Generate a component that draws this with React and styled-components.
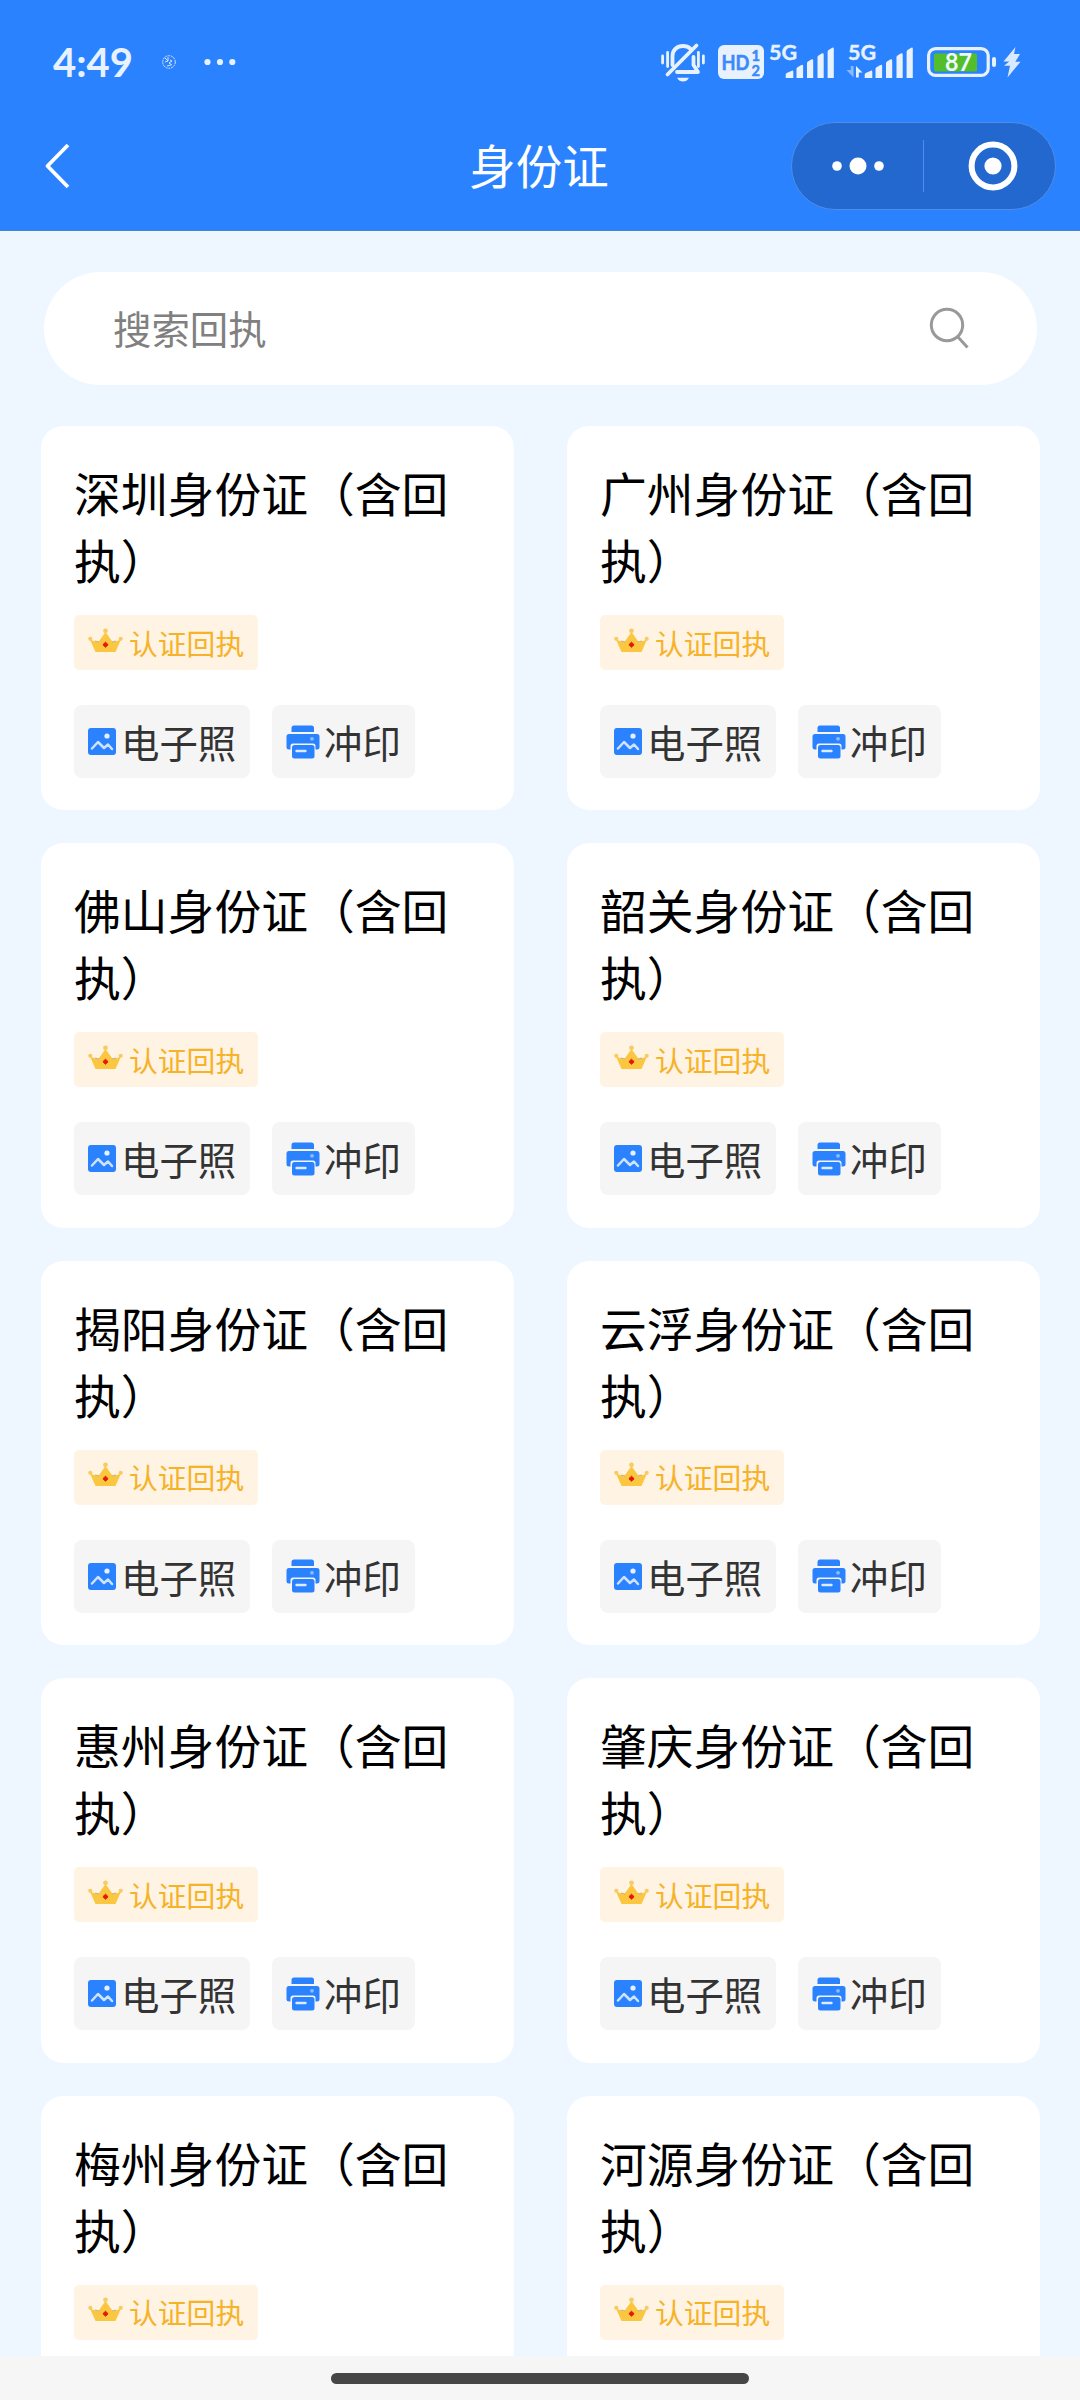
import React from 'react';
import styled, { createGlobalStyle } from 'styled-components';

const cityList = [
  { id: 1, name: '深圳' },
  { id: 2, name: '广州' },
  { id: 3, name: '佛山' },
  { id: 4, name: '韶关' },
  { id: 5, name: '揭阳' },
  { id: 6, name: '云浮' },
  { id: 7, name: '惠州' },
  { id: 8, name: '肇庆' },
  { id: 9, name: '梅州' },
  { id: 10, name: '河源' },
];

const signalBars = [
  { x: 16.7, y: 28.7, w: 7.6 },
  { x: 27.5, y: 23, w: 6.6 },
  { x: 38, y: 17.3, w: 6.2 },
  { x: 48.5, y: 11.3, w: 6.2 },
  { x: 58.6, y: 5.7, w: 6.2 },
];

const BellOffIcon = () => (
  <svg width="44" height="40" viewBox="0 0 44 40" fill="none" stroke="#e8f2ff" strokeLinecap="round">
    <path d="M1.6 14v7M6.6 10.5v14M37.4 10.5v14M42.4 14v7" strokeWidth="2.8" />
    <path d="M11.5 23V14C11.5 8 16 4 22 4c3 0 5.6 1 7.5 2.8" strokeWidth="3.8" />
    <path d="M32.5 15v8l4.5 7H16" strokeWidth="3.8" strokeLinejoin="round" />
    <path d="M35.500 3.500L6.500 32.500" strokeWidth="3.8" />
    <path d="M16 35.8h12c-1.5 2.6-3.5 3.8-6 3.8s-4.5-1.2-6-3.8z" fill="#e8f2ff" stroke="none" />
  </svg>
);

const HdIcon = () => (
  <svg width="46" height="40" viewBox="0 0 46 40">
    <rect x="0" y="3" width="46" height="34" rx="6" fill="#e8f2ff" />
    <HdText x="3.5" y="27.5" fontSize="21" textLength="28" lengthAdjust="spacingAndGlyphs">HD</HdText>
    <HdText x="33.5" y="19" fontSize="16" textLength="8.5" lengthAdjust="spacingAndGlyphs">1</HdText>
    <HdText x="33.5" y="34" fontSize="16" textLength="8.5" lengthAdjust="spacingAndGlyphs">2</HdText>
  </svg>
);

const SignalIcon = ({ active }) => (
  <svg width="66" height="40" viewBox="0 0 66 40" fill="#e8f2ff">
    <NetText x="0" y="18.3" textLength="28" lengthAdjust="spacingAndGlyphs">5G</NetText>
    {active && (
      <>
        <path d="M5.5 24v11.5L-1.5 28H2.8V24z" opacity=".5" />
        <path d="M8 35.5V24l6.5 6.5h-3.7v5z" />
      </>
    )}
    {signalBars.map((bar) => (
      <path
        key={bar.x}
        d={`M${bar.x} 36V${bar.y + 4}q0-1 1-1.8l${bar.w - 3}-2q2-1 2 1V36z`}
      />
    ))}
  </svg>
);

const BatteryIcon = () => (
  <svg width="70" height="40" viewBox="0 0 70 40">
    <rect x="1.6" y="6.6" width="59.6" height="26.8" rx="7" fill="none" stroke="#e8f2ff" strokeWidth="3.2" />
    <rect x="7" y="11.5" width="43" height="18" rx="1.5" fill="#52be2c" />
    <rect x="65" y="15" width="4" height="10" rx="2" fill="#e8f2ff" />
    <BatteryText x="18" y="29" textLength="27" lengthAdjust="spacingAndGlyphs">87</BatteryText>
  </svg>
);

const BoltIcon = () => (
  <svg width="18" height="40" viewBox="0 0 18 40">
    <path d="M12.5 5L.5 19.5h5.8L1 23.8h6L4.5 35.5 17.5 19.8h-5.2L17 12h-6z" fill="#d9e9ff" />
  </svg>
);

const CrownIcon = () => (
  <svg width="35" height="25" viewBox="0 0 35 25">
    <path d="M2 11.5l8 3L17.5 4l7.5 10.5 8-3-5.5 12.5h-20z" fill="#fbc740" />
    <path d="M7 13l4 1.2M28 13l-4 1.2" stroke="#c9b27c" strokeWidth="1.3" />
    <circle cx="17.5" cy="2.8" r="2.4" fill="#f8cb62" />
    <circle cx="2.3" cy="10.8" r="2.1" fill="#f8cb62" />
    <circle cx="32.7" cy="10.8" r="2.1" fill="#f8cb62" />
    <path d="M17.5 14.2l2.6 2.5-2.6 2.5-2.6-2.5z" fill="#e3170a" stroke="#e3170a" strokeLinejoin="round" />
  </svg>
);

const PhotoIcon = () => (
  <svg width="28" height="27" viewBox="0 0 28 27" fill="none">
    <rect width="28" height="27" rx="3" fill="#2a82ff" />
    <circle cx="19" cy="8" r="2.6" fill="#e6f1ff" />
    <path d="M4 20.5l6-6.5 6 6 4-3.5 4 4.5" stroke="#cfe3ff" strokeWidth="2.5" strokeLinecap="round" strokeLinejoin="round" />
  </svg>
);

const PrinterIcon = () => (
  <svg width="34" height="34" viewBox="0 0 34 34" fill="#2a82ff">
    <path d="M5.5 7V3q0-2.5 2.5-2.5h17.500q2.500 0 2.500 2.500v4z" />
    <path d="M3 9h28q2.5 0 2.5 2.5V22q0 2.5-2.5 2.5h-1.5V21q0-2.5-2.5-2.5H7Q4.500 18.500 4.500 21v3.500H3Q.5 24.500.5 22V11.500Q.5 9 3 9z" />
    <rect x="6" y="20" width="22.5" height="13.5" rx="2.5" />
    <path d="M10.5 26h9" stroke="#dcebff" strokeWidth="2.4" strokeLinecap="round" />
    <circle cx="26" cy="13.8" r="1.9" fill="#8cbcff" />
  </svg>
);

const App = () => {
  return (
    <Container>
      <GlobalStyle />
      <Header>
        <StatusBar>
          <Time>4:49</Time>
          <NoticeIcons>
            <svg width="14" height="14" viewBox="0 0 14 14" fill="none" stroke="#d5e7ff">
              <circle cx="7" cy="7" r="6.3" strokeDasharray="2 .8" />
              <path d="M3 3l3 3M6 2v4l-3 1M8 5l2 1-3 2 3 2M5 11l4-1" />
            </svg>
            <svg width="32" height="8" viewBox="0 0 32 8" fill="#e8f2ff">
              <circle cx="3.5" cy="4" r="3.1" />
              <circle cx="16" cy="4" r="3.1" />
              <circle cx="28.3" cy="4" r="3.1" />
            </svg>
          </NoticeIcons>
          <DeviceIcons>
            <BellOffIcon />
            <HdIcon />
            <SignalIcon />
            <SignalIcon active />
            <BatteryIcon />
            <BoltIcon />
          </DeviceIcons>
        </StatusBar>
        <NavBar>
          <BackButton aria-label="返回">
            <svg width="26" height="46" viewBox="0 0 26 46" fill="none" stroke="#fff" strokeWidth="3.8">
              <path d="M24 2L3.5 23 24 44" strokeLinejoin="round" />
            </svg>
          </BackButton>
          <PageTitle>身份证</PageTitle>
          <Capsule>
            <CapsuleButton $width="131px" aria-label="更多">
              <svg width="52" height="18" viewBox="0 0 52 18" fill="#fff">
                <circle cx="5" cy="9" r="4.8" />
                <circle cx="26" cy="9" r="8.5" />
                <circle cx="47" cy="9" r="4.8" />
              </svg>
            </CapsuleButton>
            <CapsuleLine />
            <CapsuleButton $width="137px" aria-label="关闭">
              <svg width="50" height="50" viewBox="0 0 50 50">
                <circle cx="25" cy="25" r="21.4" fill="none" stroke="#fff" strokeWidth="6" />
                <circle cx="25" cy="25" r="8.6" fill="#fff" />
              </svg>
            </CapsuleButton>
          </Capsule>
        </NavBar>
      </Header>
      <Main>
        <SearchBox>
          <span>搜索回执</span>
          <svg width="40" height="42" viewBox="0 0 40 42" fill="none" stroke="#999" strokeWidth="3">
            <circle cx="18" cy="17" r="15.7" />
            <path d="M28.5 28.500L38.500 39.500" />
          </svg>
        </SearchBox>
        <CardList>
          {cityList.map((city) => (
            <Card key={city.id}>
              <CardTitle>{city.name}身份证（含回执）</CardTitle>
              <Badge>
                <CrownIcon />
                <span>认证回执</span>
              </Badge>
              <ChipRow>
                <Chip $width="176px" $gap="5px">
                  <PhotoIcon />
                  <span>电子照</span>
                </Chip>
                <Chip $width="143px" $gap="4px">
                  <PrinterIcon />
                  <span>冲印</span>
                </Chip>
              </ChipRow>
            </Card>
          ))}
        </CardList>
      </Main>
      <BottomBar>
        <HomeIndicator />
      </BottomBar>
    </Container>
  );
};

export default App;


const GlobalStyle = createGlobalStyle`
  * {
    box-sizing: border-box;
    margin: 0;
    padding: 0;
  }
  body {
    background-color: #EEF7FF;
    font-family: 'Noto Sans CJK SC', sans-serif;
  }
  button {
    border: none;
    background: none;
  }
  ul {
    list-style: none;
  }
  svg {
    display: block;
    flex-shrink: 0;
    overflow: visible;
  }
`;

const Container = styled.div`
  width: 1080px;
  height: 2400px;
  display: flex;
  flex-direction: column;
  overflow: hidden;
  background-color: #EEF7FF;
`;

const Header = styled.header`
  flex-shrink: 0;
  height: 231px;
  background-color: #2A82FF;
  border-bottom: 1px solid #4682CB;
`;

const StatusBar = styled.div`
  height: 102px;
  padding: 42px 59px 20px 53px;
  display: flex;
  align-items: center;
`;

const Time = styled.span`
  width: 78px;
  font-family: Lato, sans-serif;
  font-size: 40px;
  font-weight: 700;
  line-height: 40px;
  letter-spacing: 0;
  white-space: nowrap;
  color: #E8F2FF;
`;

const NoticeIcons = styled.div`
  display: flex;
  align-items: center;
  gap: 28px;
  margin-left: 31px;
`;

const DeviceIcons = styled.div`
  display: flex;
  margin-left: auto;
  > svg:nth-child(2) {
    margin-left: 13px;
  }
  > svg:nth-child(3) {
    margin-left: 5px;
  }
  > svg:nth-child(4) {
    margin-left: 13px;
  }
  > svg:nth-child(5) {
    margin-left: 13px;
  }
  > svg:nth-child(6) {
    margin-left: 6px;
  }
`;

const HdText = styled.text`
  font-family: Lato, sans-serif;
  font-weight: 700;
  fill: #3A8AFC;
  stroke: #3A8AFC;
  stroke-width: 0.5px;
`;

const NetText = styled.text`
  font-family: Lato, sans-serif;
  font-size: 21.5px;
  font-weight: 700;
  stroke: #E8F2FF;
  stroke-width: 0.4px;
`;

const BatteryText = styled.text`
  font-family: Lato, sans-serif;
  font-size: 25px;
  font-weight: 700;
  fill: #F0F8FF;
`;

const NavBar = styled.div`
  height: 128px;
  padding: 0 24px 0 44px;
  display: grid;
  grid-template-columns: 1fr auto 1fr;
  align-items: center;
`;

const BackButton = styled.button`
  width: 26px;
`;

const PageTitle = styled.h1`
  margin-left: -22px;
  padding-bottom: 5px;
  font-size: 46.5px;
  font-weight: 400;
  line-height: 60px;
  color: #FFF;
`;

const Capsule = styled.div`
  justify-self: end;
  width: 265px;
  height: 88px;
  display: flex;
  align-items: center;
  border: 1px solid #4E8DE8;
  border-radius: 44px;
  background-color: #2268CE;
`;

const CapsuleButton = styled.button`
  flex-shrink: 0;
  width: ${({ $width }) => $width};
  display: flex;
  justify-content: center;
`;

const CapsuleLine = styled.i`
  width: 1px;
  height: 52px;
  flex-shrink: 0;
  background-color: #4E8DE8;
`;

const Main = styled.main`
  flex: 1;
  min-height: 0;
  padding: 41px 40px 0 41px;
  overflow: hidden;
`;

const SearchBox = styled.div`
  height: 113px;
  margin: 0 3px;
  padding: 0 68px 0 69px;
  display: flex;
  justify-content: space-between;
  align-items: center;
  border-radius: 57px;
  background-color: #FFF;
  font-size: 38.4px;
  color: #808080;
  > span {
    padding-bottom: 3px;
  }
`;

const CardList = styled.ul`
  margin-top: 41px;
  display: grid;
  grid-template-columns: 473px 473px;
  justify-content: space-between;
  row-gap: 33px;
`;

const Card = styled.li`
  height: 384.4px;
  padding: 32px 33px 0;
  border-radius: 22px;
  background-color: #FFF;
`;

const CardTitle = styled.h2`
  font-size: 46.8px;
  font-weight: 400;
  line-height: 67px;
  color: #000;
`;

const Badge = styled.div`
  width: 184px;
  height: 55px;
  margin-top: 23px;
  padding-left: 14px;
  display: flex;
  align-items: center;
  gap: 6px;
  border-radius: 5px;
  background-color: #FFF3E3;
  font-size: 28.8px;
  color: #F6B229;
  white-space: nowrap;
  > svg {
    margin-top: -5px;
  }
  > span {
    padding-bottom: 1px;
  }
`;

const ChipRow = styled.div`
  margin-top: 35px;
  display: flex;
  gap: 22px;
`;

const Chip = styled.div`
  width: ${({ $width }) => $width};
  height: 73px;
  padding-left: 14px;
  display: flex;
  align-items: center;
  gap: ${({ $gap }) => $gap};
  border-radius: 8px;
  background-color: #F5F5F5;
  font-size: 38.4px;
  color: #333;
  white-space: nowrap;
  > span {
    padding-bottom: 1px;
  }
`;

const BottomBar = styled.footer`
  flex-shrink: 0;
  height: 44px;
  padding-top: 17px;
  background-color: #F6F6F6;
`;

const HomeIndicator = styled.div`
  width: 418px;
  height: 11px;
  margin: 0 auto;
  border-radius: 6px;
  background-color: #464646;
`;
